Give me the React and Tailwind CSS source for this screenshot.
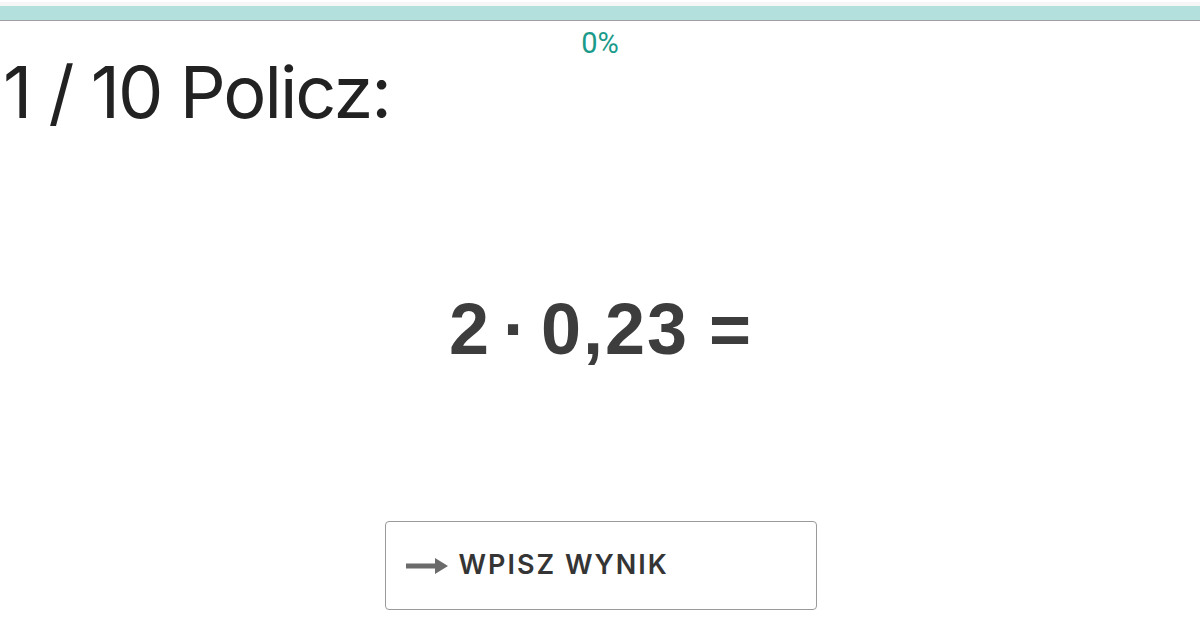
export default function App() {
  return (
    <div className="w-[1200px] h-[630px] bg-white overflow-hidden relative" style={{ fontFamily: "Inter, 'Noto Sans', sans-serif" }}>
      <div className="pt-[2px]">
        <div className="h-[4px] bg-[#f6f6f6]"></div>
        <div className="h-[15px] bg-[#b3dfdc] border-b border-b-[#a0a0a0]"></div>
      </div>
      <div className="flex justify-center h-[38px]">
        <span className="text-[29px] leading-none text-[#1a9a8a] mt-[8px]" style={{ fontFamily: "Roboto, sans-serif" }}>0%</span>
      </div>
      <h1 className="text-[72px] leading-none text-[#222] pl-[3px] mt-[-3px] tracking-[-2px]">1 / 10 Policz:</h1>
      <div className="flex justify-center mt-[165px]">
        <div className="text-[72px] leading-none font-bold text-[#3d3d3d] flex items-baseline" style={{ fontFamily: "'Liberation Sans', Arial, sans-serif" }}>
          <span>2</span>
          <span className="mx-[14px]">·</span>
          <span className="tracking-[2px]">0,23</span>
          <span className="ml-[20px]">=</span>
        </div>
      </div>
      <div className="flex justify-center mt-[156px] pl-[1px]">
        <button className="w-[432px] h-[89px] border border-[#9a9a9a] rounded-[4px] flex items-center pl-[20px] gap-[11px]">
          <svg width="42" height="16" viewBox="0 0 42 16">
            <rect x="0" y="5.5" width="31" height="5" fill="#6b6b6b" />
            <polygon points="29,0 42,8 29,16" fill="#6b6b6b" />
          </svg>
          <span className="text-[27px] font-semibold tracking-[2px] text-[#353535]" style={{ fontFamily: "Inter, sans-serif" }}>WPISZ WYNIK</span>
        </button>
      </div>
    </div>
  );
}
